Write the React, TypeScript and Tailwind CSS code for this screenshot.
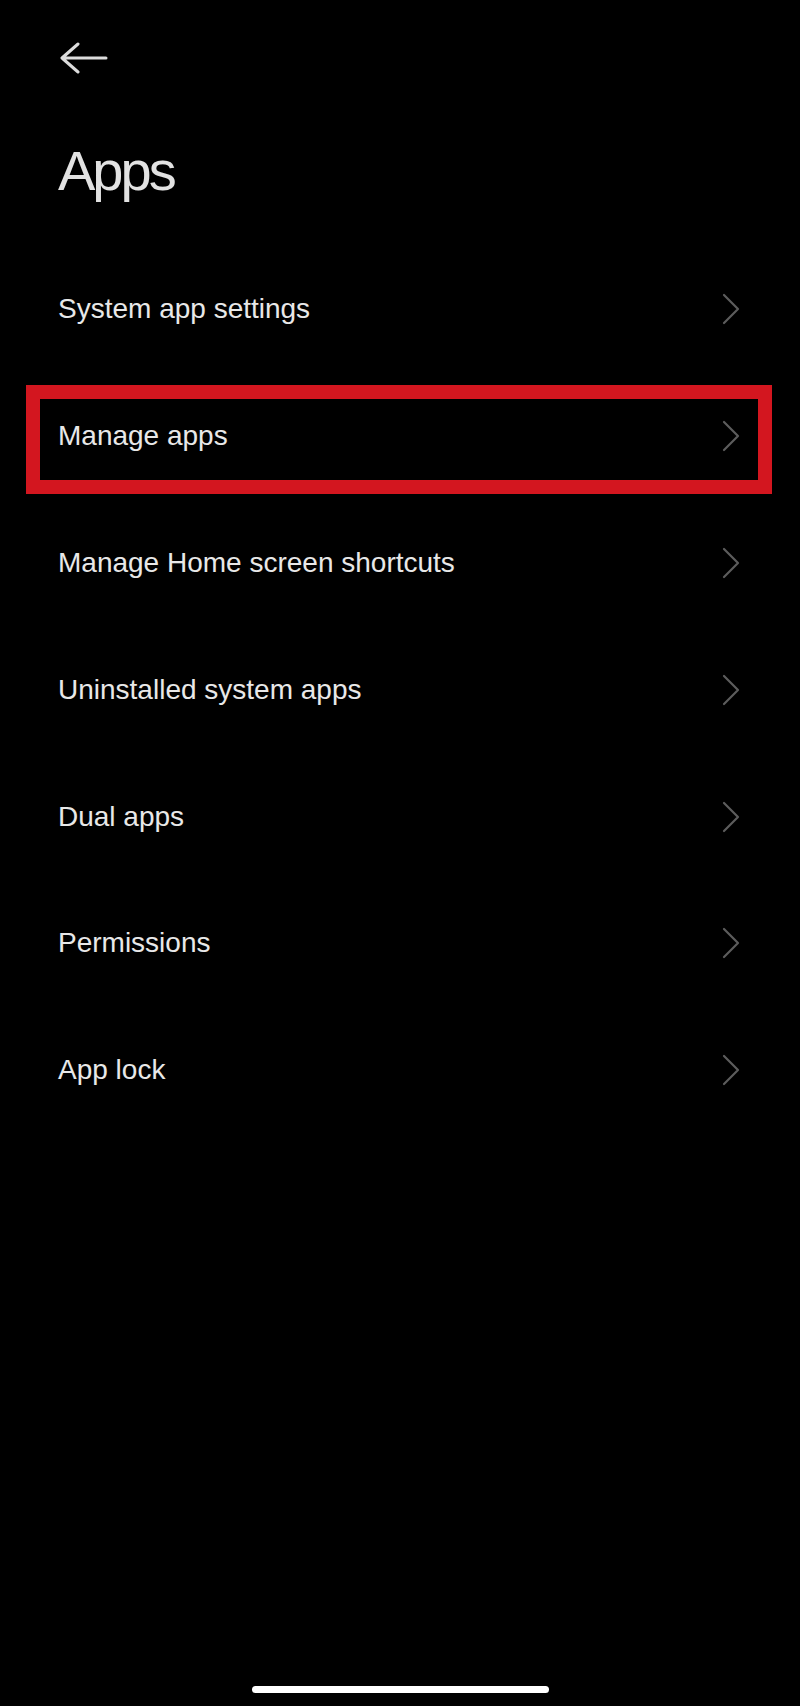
const items = [
	"System app settings",
	"Manage apps",
	"Manage Home screen shortcuts",
	"Uninstalled system apps",
	"Dual apps",
	"Permissions",
	"App lock",
];

const Chevron = () => (
	<svg width="18" height="32" viewBox="0 0 18 32" fill="none">
		<path
			d="M2 2 L16 16 L2 30"
			stroke="#5c5c5c"
			strokeWidth="2.2"
			strokeLinecap="round"
			strokeLinejoin="round"
		/>
	</svg>
);

const App = () => {
	return (
		<div className="w-[800px] min-h-[1706px] bg-black flex flex-col font-['Liberation_Sans',Arial,sans-serif]">
			{/* back arrow */}
			<div className="pt-[42px] pl-[60px]">
				<svg width="48" height="32" viewBox="0 0 48 32" fill="none">
					<path
						d="M2 16 H46 M18 2 L2 16 L18 30"
						stroke="#dcdcdc"
						strokeWidth="3"
						strokeLinecap="round"
						strokeLinejoin="round"
					/>
				</svg>
			</div>

			<h1 className="mt-[69px] ml-[58px] text-[56px] leading-none tracking-[-3px] text-[#e2e2e2]">
				Apps
			</h1>

			{/* settings list */}
			<div className="mt-[47px] flex flex-col">
				{items.map((label, i) => (
					<div
						key={label}
						className="relative h-[126.8px] flex items-center justify-between pl-[58px] pr-[60px]"
					>
						<span className="text-[28px] leading-none text-[#e8e8e8]">{label}</span>
						<Chevron />
						{i === 1 && (
							<div className="absolute left-[26px] right-[28px] top-[12px] h-[109px] border-[14px] border-[#d3161f]" />
						)}
					</div>
				))}
			</div>

			{/* home indicator */}
			<div className="mt-auto mx-auto mb-[13px] w-[297px] h-[7px] rounded-full bg-white" />
		</div>
	);
};

export default App;
